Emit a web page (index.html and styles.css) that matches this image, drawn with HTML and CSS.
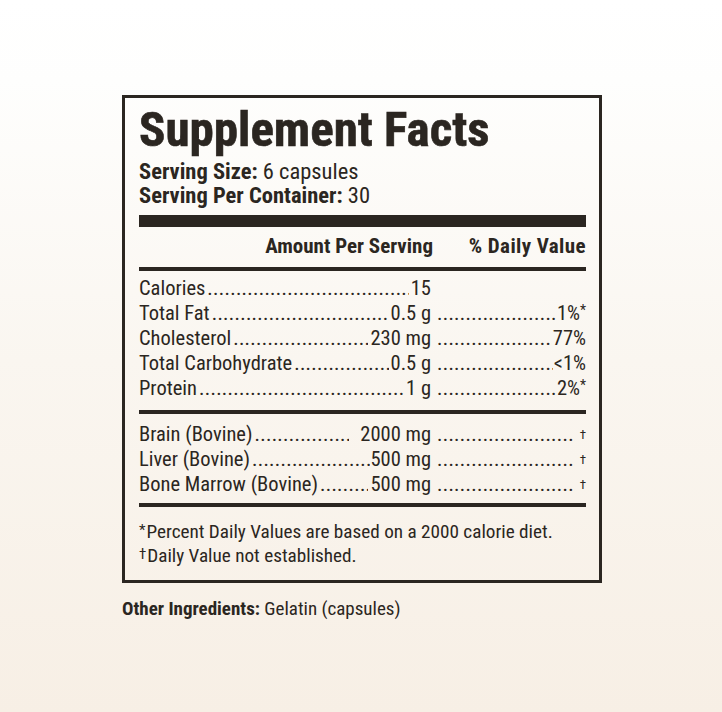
FILE: index.html
```html
<!DOCTYPE html>
<html>
<head>
<meta charset="utf-8">
<link rel="stylesheet" href="styles.css">
</head>
<body>
<div class="page">
  <div class="label">
    <h1 class="title">Supplement Facts</h1>
    <div class="serving"><b>Serving Size:</b> 6 capsules</div>
    <div class="serving"><b>Serving Per Container:</b> 30</div>
    <div class="bar-thick"></div>
    <div class="head">
      <span class="head-amt">Amount Per Serving</span>
      <span class="head-dv">% Daily Value</span>
    </div>
    <div class="bar-mid"></div>
    <div class="rows">
      <div class="row">
        <div class="c1"><span>Calories</span><span class="lead"></span><span>15</span></div>
        <div class="c2"></div>
      </div>
      <div class="row">
        <div class="c1"><span>Total Fat</span><span class="lead"></span><span>0.5 g</span></div>
        <div class="c2"><span class="lead"></span><span>1%<sup>*</sup></span></div>
      </div>
      <div class="row">
        <div class="c1"><span>Cholesterol</span><span class="lead"></span><span>230 mg</span></div>
        <div class="c2"><span class="lead"></span><span>77%</span></div>
      </div>
      <div class="row">
        <div class="c1"><span>Total Carbohydrate</span><span class="lead"></span><span>0.5 g</span></div>
        <div class="c2"><span class="lead"></span><span>&lt;1%</span></div>
      </div>
      <div class="row">
        <div class="c1"><span>Protein</span><span class="lead"></span><span>1 g</span></div>
        <div class="c2"><span class="lead"></span><span>2%<sup>*</sup></span></div>
      </div>
    </div>
    <div class="bar-mid"></div>
    <div class="rows rows-b">
      <div class="row">
        <div class="c1"><span>Brain (Bovine)</span><span class="lead"></span><span>&nbsp;&nbsp;2000 mg</span></div>
        <div class="c2"><span class="lead"></span><span class="dag">†</span></div>
      </div>
      <div class="row">
        <div class="c1"><span>Liver (Bovine)</span><span class="lead lead-tight"></span><span>500 mg</span></div>
        <div class="c2"><span class="lead"></span><span class="dag">†</span></div>
      </div>
      <div class="row">
        <div class="c1"><span>Bone Marrow (Bovine)</span><span class="lead"></span><span>500 mg</span></div>
        <div class="c2"><span class="lead"></span><span class="dag">†</span></div>
      </div>
    </div>
    <div class="bar-mid"></div>
    <div class="notes">
      <div><span class="mark">*</span>Percent Daily Values are based on a 2000 calorie diet.</div>
      <div><span class="mark">†</span>Daily Value not established.</div>
    </div>
  </div>
  <div class="other"><b>Other Ingredients:</b> Gelatin (capsules)</div>
</div>
</body>
</html>
```

FILE: styles.css
```css
html, body {
  margin: 0;
  padding: 0;
}
body {
  width: 722px;
  height: 712px;
  overflow: hidden;
  background: linear-gradient(to bottom, #ffffff 0px, #fefefd 80px, #faf6f0 360px, #f7efe5 712px);
  color: #2b2621;
  font-family: "Roboto Condensed", "Liberation Sans", sans-serif;
}
.page {
  padding: 95px 0 0 122px;
}
.label {
  width: 480px;
  box-sizing: border-box;
  border: 3px solid #2b2621;
  padding: 0 13px 0 14px;
}
.title {
  margin: 0;
  font-size: 49px;
  font-weight: bold;
  line-height: 59px;
  padding-top: 2px;
  -webkit-text-stroke: 0.6px #2b2621;
}
.serving {
  font-size: 22.5px;
  line-height: 24px;
}
.serving b { font-weight: bold; }
.bar-thick {
  height: 12px;
  background: #2b2621;
  margin-top: 8px;
}
.head {
  display: flex;
  font-size: 21px;
  font-weight: bold;
  line-height: 24px;
  padding: 7px 0 9px;
}
.head-amt {
  width: 294px;
  text-align: right;
}
.head-dv {
  flex: 1;
  text-align: right;
  letter-spacing: 0.4px;
}
.bar-mid {
  height: 4px;
  background: #2b2621;
}
.rows {
  padding: 5px 0 9px;
  font-size: 20.5px;
  line-height: 25px;
}
.rows-b {
  padding: 8px 0 6px;
}
.row {
  display: flex;
}
.c1 {
  width: 292px;
  display: flex;
  white-space: nowrap;
}
.c2 {
  flex: 1;
  min-width: 0;
  display: flex;
  white-space: nowrap;
  padding-left: 4px;
}
.lead {
  flex: 1 1 0;
  min-width: 0;
  overflow: hidden;
  margin: 0 2px;
}
.lead::before {
  content: "..............................................................................................................";
  letter-spacing: 0.3px;
}
.lead-tight { margin-right: 0; }
.c2 .lead { margin-right: 1px; }
sup {
  font-size: 14px;
  line-height: 0;
  vertical-align: 5px;
}
.dag {
  font-size: 13px;
  align-self: flex-end;
  margin-left: 4px;
  color: #2b2621;
}
.notes {
  font-size: 19.2px;
  line-height: 23px;
  padding: 12px 0 13px;
}
.mark {
  font-size: 15px;
  vertical-align: 3px;
  margin-right: 1px;
}
.other {
  margin-top: 15px;
  font-size: 19px;
  line-height: 22px;
}
.other b { font-weight: bold; }
```
